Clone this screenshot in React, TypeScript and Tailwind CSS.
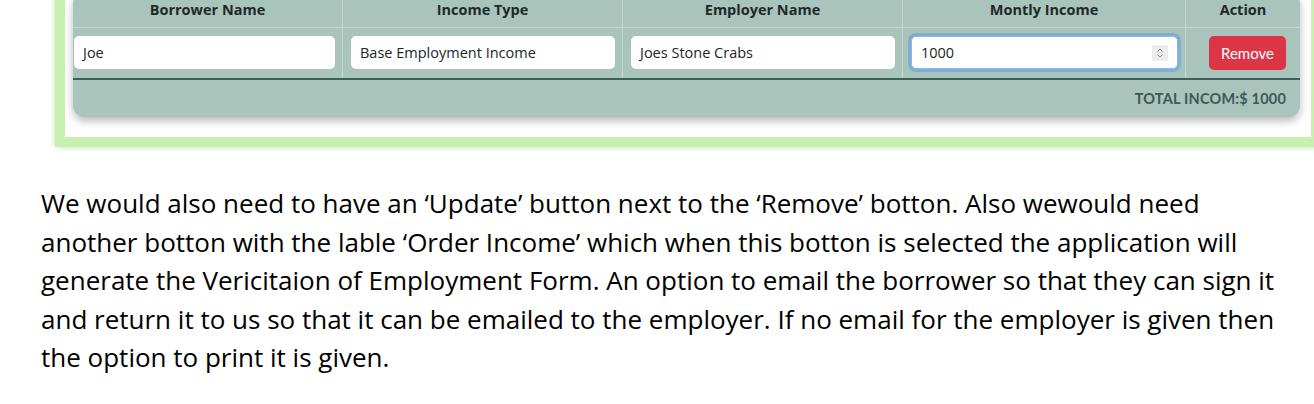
import React from "react";

// Columns of the income table, widths in px as seen on the page
const columns = [
  { title: "Borrower Name", width: "w-[270px]" },
  { title: "Income Type", width: "w-[280px]" },
  { title: "Employer Name", width: "w-[280px]" },
  { title: "Montly Income", width: "w-[283px]" },
  { title: "Action", width: "w-[114px]" },
];

function Field({ value, pad }: { value: string; pad: string }) {
  return (
    <div className={`h-full ${pad} py-[8px]`}>
      <div className="h-[33px] rounded-[5px] bg-white px-[9px] flex items-center text-[14.5px] text-[#212529]">
        {value}
      </div>
    </div>
  );
}

function Spinner() {
  return (
    <span className="w-[16px] h-[16px] bg-[#ececec] rounded-[2px] flex items-center justify-center">
      <svg width="8" height="12" viewBox="0 0 8 12" fill="none" stroke="#8a8a8a" strokeWidth="1">
        <path d="M1.5 4.5 L4 2 L6.5 4.5" />
        <path d="M1.5 7.5 L4 10 L6.5 7.5" />
      </svg>
    </span>
  );
}

function IncomeTable() {
  return (
    <div className="ml-[8px] w-[1227px] rounded-[12px] bg-[#a8c4bb] overflow-hidden shadow-[0_4px_8px_rgba(0,0,0,0.28)]">
      {/* header */}
      <div className="flex h-[36px] border-b border-[#c3d8d0]">
        {columns.map((c, i) => (
          <div
            key={c.title}
            className={`${c.width} flex items-center justify-center font-bold text-[14.5px] text-[#1f2a28] ${
              i < columns.length - 1 ? "border-r border-[#c3d8d0]" : ""
            }`}
          >
            {c.title}
          </div>
        ))}
      </div>

      {/* row */}
      <div className="flex h-[52px] border-b-2 border-[#3f5f5a]">
        <div className="w-[270px] border-r border-[#c3d8d0]">
          <Field value="Joe" pad="pl-[1px] pr-[7px]" />
        </div>
        <div className="w-[280px] border-r border-[#c3d8d0]">
          <Field value="Base Employment Income" pad="pl-[8px] pr-[7px]" />
        </div>
        <div className="w-[280px] border-r border-[#c3d8d0]">
          <Field value="Joes Stone Crabs" pad="pl-[8px] pr-[7px]" />
        </div>
        <div className="w-[283px] border-r border-[#c3d8d0] pl-[8px] pr-[7px] py-[8px]">
          <div className="h-[33px] rounded-[5px] bg-white border border-[#86b7fe] shadow-[0_0_0_3px_rgba(13,110,253,0.25)] pl-[9px] pr-[9px] flex items-center justify-between text-[14.5px] text-[#212529]">
            <span>1000</span>
            <Spinner />
          </div>
        </div>
        <div className="w-[114px] pl-[23px] py-[8px]">
          <button className="h-[34px] w-[77px] rounded-[5px] bg-[#dc3545] text-white text-[15px] font-['Lato',sans-serif]">
            Remove
          </button>
        </div>
      </div>

      {/* footer */}
      <div className="h-[37px] flex items-center justify-end pr-[14px] font-['Lato',sans-serif] font-bold text-[14.5px] tracking-[0.2px] text-[#3d5a57]">
        TOTAL INCOM:$ 1000
      </div>
    </div>
  );
}

const lines = [
  "We would also need to have an \u2018Update\u2019 button next to the \u2018Remove\u2019 botton. Also wewould need",
  "another botton with the lable \u2018Order Income\u2019 which when this botton is selected the application will",
  "generate the Vericitaion of Employment Form. An option to email the borrower so that they can sign it",
  "and return it to us so that it can be emailed to the employer. If no email for the employer is given then",
  "the option to print it is given.",
];

export default function App() {
  return (
    <div className="w-[1314px] h-[404px] bg-white overflow-hidden font-['Open_Sans',sans-serif]">
      {/* screenshot frame */}
      <div className="-mt-[26px] ml-[55px] w-[1266px] border-[10px] border-[#c8efb0] bg-white pt-[8px] pb-[20px] shadow-[0_0_6px_rgba(180,230,150,0.9)]">
        <IncomeTable />
      </div>

      <div className="mt-[37px] pl-[41px] text-[26px] leading-[38.5px] text-black">
        {lines.map((l) => (
          <div key={l} className="whitespace-nowrap">
            {l}
          </div>
        ))}
      </div>
    </div>
  );
}
